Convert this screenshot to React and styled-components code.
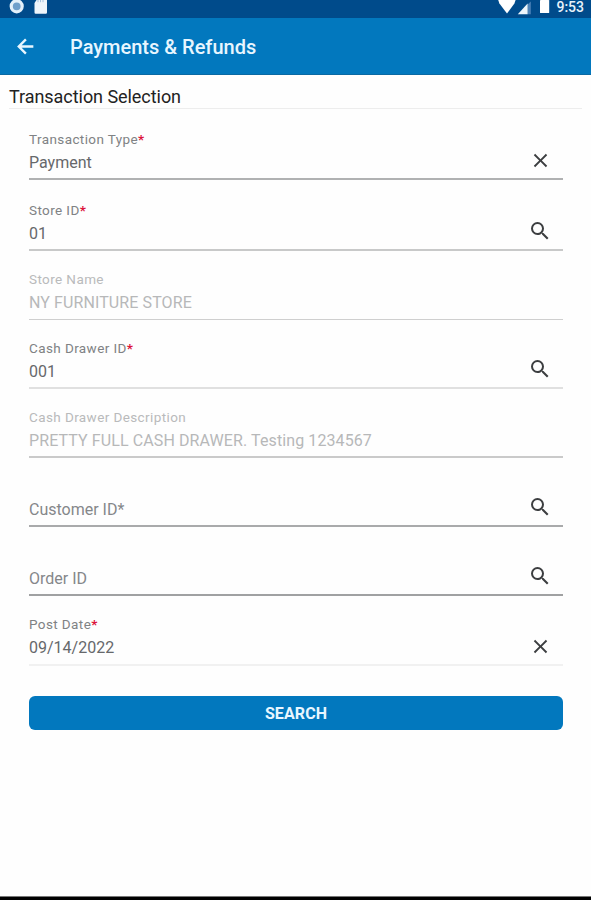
import React from "react";
import styled, { createGlobalStyle } from "styled-components";
import { MdClose, MdSearch } from "react-icons/md";

const fields = [
  { label: "Transaction Type", value: "Payment", required: true, icon: "clear", height: 70, line: "#b0b1b2" },
  { label: "Store ID", value: "01", required: true, icon: "search", height: 71, line: "#c8c9c9" },
  { label: "Store Name", value: "NY FURNITURE STORE", disabled: true, height: 69, line: "#cfcfcf", thin: true },
  { label: "Cash Drawer ID", value: "001", required: true, icon: "search", height: 69, line: "#e0e0e0" },
  { label: "Cash Drawer Description", value: "PRETTY FULL CASH DRAWER. Testing 1234567", disabled: true, height: 69, line: "#cacaca" },
  { value: "Customer ID*", placeholder: true, icon: "search", height: 69, line: "#a9aaab" },
  { value: "Order ID", placeholder: true, icon: "search", height: 69, line: "#a0a1a2" },
  { label: "Post Date", value: "09/14/2022", required: true, icon: "clear", height: 70, line: "#f1f1f1", pad: 7 },
];

const StatusIcons = () => (
  <StatusLeft>
    <svg width="40" height="18" viewBox="0 0 40 18">
      <circle cx="8.7" cy="6.3" r="5.5" fill="#6f9fcb" stroke="#e4f0fa" strokeWidth="3.2" />
      <path d="M28.5 0H39v12.5a1.2 1.2 0 0 1-1.2 1.2H27.7a1.2 1.2 0 0 1-1.2-1.2V3z" fill="#eef5fb" />
      <path d="M30 0v2.2M32.5 0v2.2M35 0v2.2" stroke="#a5c2de" strokeWidth="1" />
    </svg>
  </StatusLeft>
);

const BackArrow = () => (
  <svg width="23" height="23" viewBox="0 0 24 24" fill="none" stroke="currentColor" strokeWidth="2.5">
    <path d="M20.2 12H5.5M12.4 4.6L5 12l7.4 7.4" />
  </svg>
);

const App = () => {
  return (
    <Screen>
      <GlobalStyle />
      <StatusBar>
        <StatusIcons />
        <StatusRight>
          <svg width="59" height="18" viewBox="0 0 59 18">
            <path d="M1.2 0H18.6L17.4 3.5 10 13.5 2.4 3.5z" fill="#fff" />
            <path d="M33.8 1.5V14.3h-3.2V4.5z" fill="#4c81b7" />
            <path d="M30.6 3.6V14.3H20.8z" fill="#eef5fb" />
            <rect x="43" y="0" width="9.2" height="13" rx="0.6" fill="#fff" />
          </svg>
          <Clock>9:53</Clock>
        </StatusRight>
      </StatusBar>
      <AppBar>
        <BackButton aria-label="Back">
          <BackArrow />
        </BackButton>
        <Title>Payments &amp; Refunds</Title>
      </AppBar>
      <Section>Transaction Selection</Section>
      <Form>
        {fields.map((f) => (
          <Field key={f.label || f.value} $height={f.height} $line={f.line} $thin={f.thin}>
            <Texts $pad={f.pad || (f.thin ? 7 : 6)}>
              {f.label && (
                <Label $disabled={f.disabled}>
                  {f.label}
                  {f.required && <Required>*</Required>}
                </Label>
              )}
              <Value $disabled={f.disabled} $placeholder={f.placeholder}>{f.value}</Value>
            </Texts>
            {f.icon && (
              <FieldButton aria-label={f.icon}>
                {f.icon === "clear" ? <MdClose size={23} /> : <MdSearch size={24} />}
              </FieldButton>
            )}
          </Field>
        ))}
        <SearchButton>SEARCH</SearchButton>
      </Form>
      <BottomEdge />
    </Screen>
  );
};

export default App;

const GlobalStyle = createGlobalStyle`
  * {
    box-sizing: border-box;
  }
  body {
    margin: 0;
    background: #fefefe;
    font-family: Roboto, "Liberation Sans", sans-serif;
  }
  button {
    padding: 0;
    border: 0;
    background: none;
    font-family: inherit;
  }
  svg {
    display: block;
  }
`;

const Screen = styled.div`
  display: flex;
  flex-direction: column;
  width: 591px;
  height: 900px;
  overflow: hidden;
`;

const StatusBar = styled.div`
  display: flex;
  justify-content: space-between;
  height: 18px;
  flex: none;
  background: #004b8b;
`;

const StatusLeft = styled.div`
  padding-left: 8px;
`;

const StatusRight = styled.div`
  display: flex;
  padding-right: 7px;
`;

const Clock = styled.span`
  color: #e9f2fa;
  font-size: 14px;
  font-weight: 500;
  line-height: 14px;
`;

const AppBar = styled.header`
  display: flex;
  align-items: center;
  height: 57px;
  flex: none;
  padding-left: 14px;
  background: #0278be;
  border-bottom: 1px solid #0a69a3;
  color: #e8f6ff;
`;

const BackButton = styled.button`
  width: 23px;
  color: inherit;
`;

const Title = styled.h1`
  margin: 2px 0 0 33px;
  font-size: 20px;
  font-weight: 500;
  line-height: 24px;
`;

const Section = styled.h2`
  flex: none;
  height: 34px;
  margin: 0 9px;
  padding-top: 11px;
  border-bottom: 1px solid #ededed;
  color: #222;
  font-size: 18px;
  font-weight: 400;
  line-height: 22px;
  letter-spacing: -0.05px;
`;

const Form = styled.div`
  flex: 1;
  padding: 1px 28px 0 29px;
`;

const Field = styled.div`
  display: flex;
  align-items: flex-end;
  justify-content: space-between;
  height: ${(p) => p.$height}px;
  border-bottom: ${(p) => (p.$thin ? 1 : 2)}px solid ${(p) => p.$line};
`;

const Texts = styled.div`
  display: flex;
  flex-direction: column;
  padding-bottom: ${(p) => p.$pad}px;
  white-space: nowrap;
`;

const Label = styled.span`
  color: ${(p) => (p.$disabled ? "#b9babb" : "#808284")};
  font-size: 13.5px;
  line-height: 16px;
  letter-spacing: 0.4px;
  margin-bottom: 6px;
`;

const Required = styled.span`
  color: #dc143c;
  font-weight: 700;
  letter-spacing: 0;
`;

const Value = styled.span`
  color: ${(p) => (p.$disabled ? "#b7b8b9" : p.$placeholder ? "#85878a" : "#66686b")};
  font-size: 16px;
  line-height: 19px;
  letter-spacing: ${(p) => (p.$disabled ? 0.1 : 0)}px;
`;

const FieldButton = styled.button`
  display: flex;
  align-items: center;
  justify-content: center;
  width: 24px;
  height: 24px;
  margin: 0 11px 6px 0;
  color: #3c3e40;
`;

const SearchButton = styled.button`
  display: block;
  width: 100%;
  height: 34px;
  margin-top: 30px;
  border-radius: 6px;
  background: #0278be;
  color: #e8f6ff;
  font-size: 16px;
  font-weight: 700;
  letter-spacing: 0.1px;
`;

const BottomEdge = styled.div`
  flex: none;
  height: 4px;
  background: #000;
  border-top: 1px solid #777;
`;
